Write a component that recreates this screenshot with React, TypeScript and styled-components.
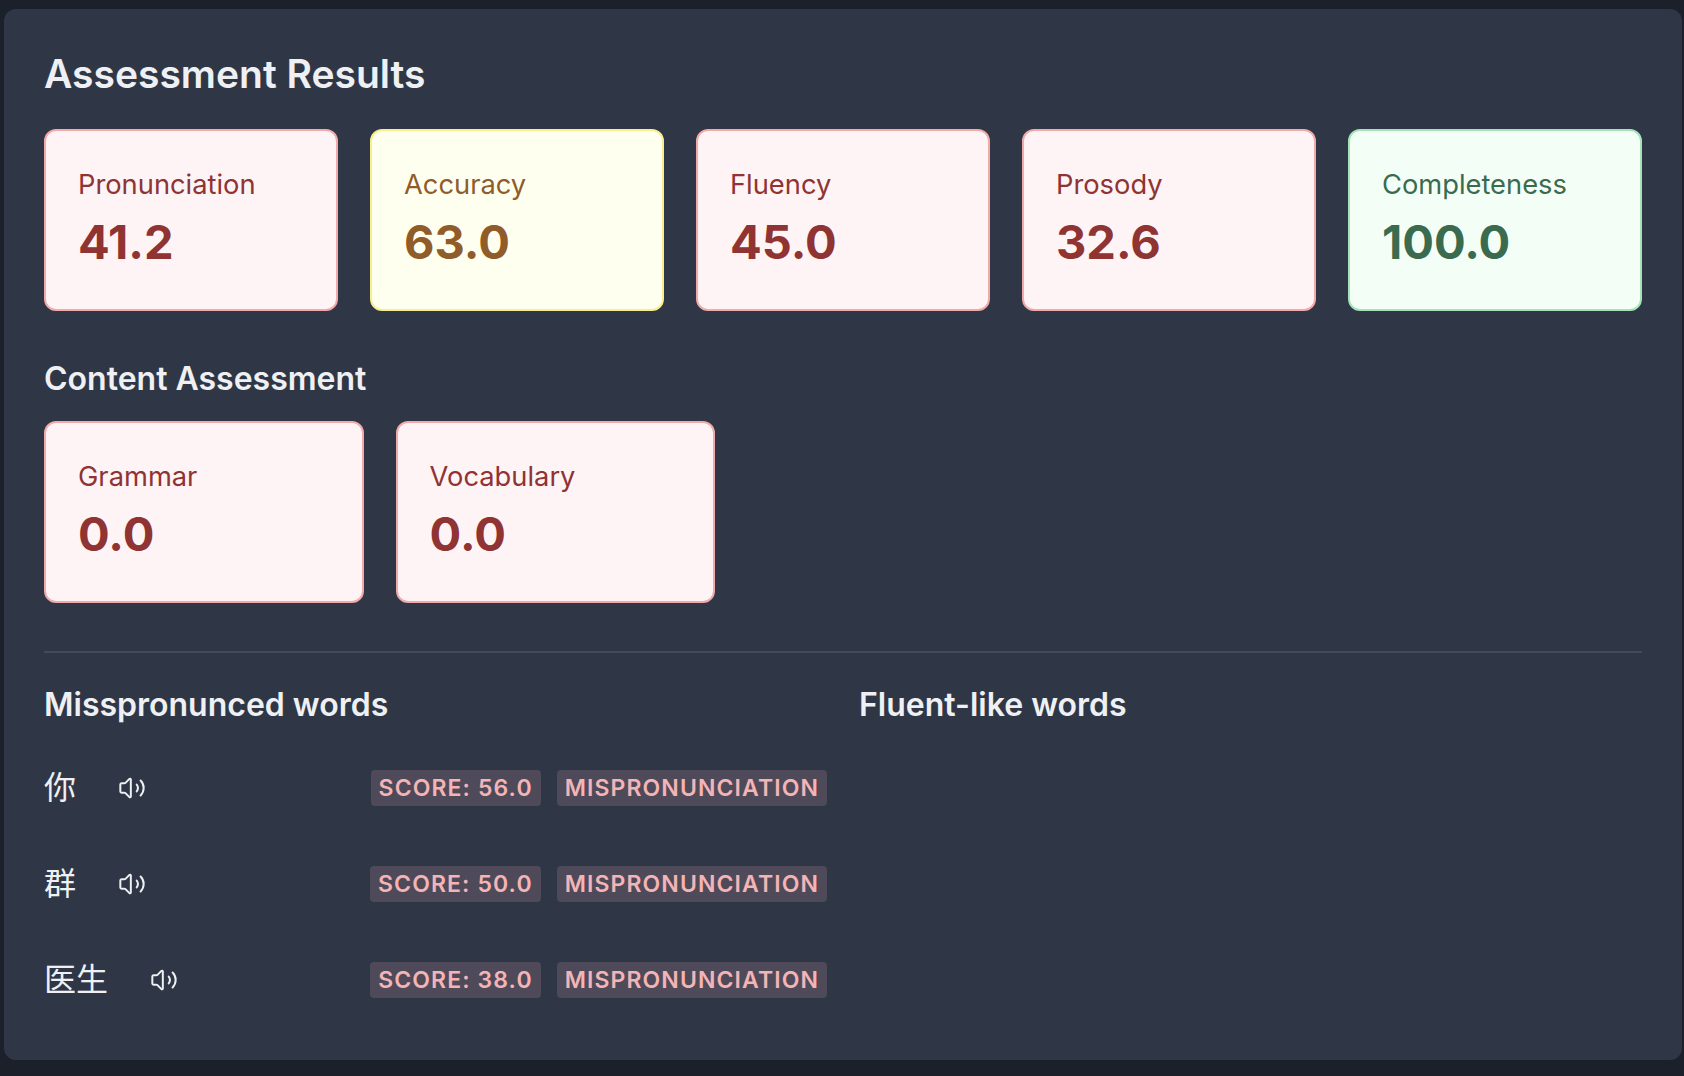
import styled, { createGlobalStyle } from 'styled-components';
import { Volume2 } from 'lucide-react';

const GlobalStyle = createGlobalStyle`
    html, body {
        margin: 0;
        padding: 0;
        background-color: #1b202b;
    }
    * {
        box-sizing: border-box;
    }
`;

type Tone = 'red' | 'yellow' | 'green';

const tones = {
    red: { bg: '#fef4f6', border: '#f2a9a9', text: '#8f3333' },
    yellow: { bg: '#fffff0', border: '#f7ef8f', text: '#8f5c2a' },
    green: { bg: '#f3fff6', border: '#a6e3b9', text: '#3b6b4e' },
};

const Page = styled.div`
    width: 1684px;
    height: 1076px;
    padding: 9px 2px 16px 4px;
    font-family: Inter, "Noto Sans CJK SC", sans-serif;
`;

const Panel = styled.div`
    height: 100%;
    padding: 40px;
    border-radius: 12px;
    background-color: #2f3747;
    color: #eff0f3;
`;

const Title = styled.h2`
    margin: 0 0 30px;
    font-size: 39px;
    line-height: 50px;
    font-weight: 600;
`;

const Subtitle = styled.h3`
    margin: 0 0 22px;
    font-size: 32px;
    line-height: 40px;
    font-weight: 600;
`;

const ColumnTitle = styled(Subtitle)`
    margin-bottom: 39px;
`;

const CardRow = styled.div`
    display: flex;
    gap: 32px;
    margin-bottom: 48px;
`;

const Card = styled.div<{ $tone: Tone }>`
    flex: 0 1 20%;
    height: 182px;
    padding: 32px;
    border: 2px solid ${(p) => tones[p.$tone].border};
    border-radius: 12px;
    background-color: ${(p) => tones[p.$tone].bg};
    color: ${(p) => tones[p.$tone].text};
`;

const CardLabel = styled.div`
    font-size: 27.3px;
    line-height: 44px;
`;

const CardValue = styled.div`
    margin-top: 5px;
    font-size: 47px;
    line-height: 60px;
    font-weight: 700;
`;

const Divider = styled.hr`
    margin: 48px 0 32px;
    border: none;
    border-top: 2px solid #444a59;
`;

const Columns = styled.div`
    display: grid;
    grid-template-columns: 1fr 1fr;
    gap: 32px;
`;

const WordList = styled.div`
    display: flex;
    flex-direction: column;
    gap: 48px;
`;

const WordRow = styled.div`
    display: flex;
    align-items: center;
    height: 48px;
`;

const Word = styled.span`
    font-size: 32px;
    line-height: 48px;
    font-weight: 400;
`;

const SoundButton = styled.button`
    display: flex;
    margin-left: 42px;
    padding: 0;
    border: none;
    background: none;
    color: #eff0f3;
`;

const Tags = styled.div`
    display: flex;
    gap: 16px;
    margin-left: auto;
`;

const Tag = styled.span`
    padding: 0 8px;
    border-radius: 4px;
    background-color: #4e4a59;
    color: #f4b4b6;
    font-size: 23px;
    line-height: 36px;
    font-weight: 600;
    letter-spacing: 0.048em;
    text-transform: uppercase;
`;

const scores: { label: string; value: string; tone: Tone }[] = [
    { label: 'Pronunciation', value: '41.2', tone: 'red' },
    { label: 'Accuracy', value: '63.0', tone: 'yellow' },
    { label: 'Fluency', value: '45.0', tone: 'red' },
    { label: 'Prosody', value: '32.6', tone: 'red' },
    { label: 'Completeness', value: '100.0', tone: 'green' },
];

const content: { label: string; value: string; tone: Tone }[] = [
    { label: 'Grammar', value: '0.0', tone: 'red' },
    { label: 'Vocabulary', value: '0.0', tone: 'red' },
];

const words = [
    { word: '你', score: '56.0' },
    { word: '群', score: '50.0' },
    { word: '医生', score: '38.0' },
];

export default function App() {
    return (
        <Page>
            <GlobalStyle />
            <Panel>
                <Title>Assessment Results</Title>
                <CardRow>
                    {scores.map((s) => (
                        <Card key={s.label} $tone={s.tone}>
                            <CardLabel>{s.label}</CardLabel>
                            <CardValue>{s.value}</CardValue>
                        </Card>
                    ))}
                </CardRow>
                <Subtitle>Content Assessment</Subtitle>
                <CardRow>
                    {content.map((s) => (
                        <Card key={s.label} $tone={s.tone}>
                            <CardLabel>{s.label}</CardLabel>
                            <CardValue>{s.value}</CardValue>
                        </Card>
                    ))}
                </CardRow>
                <Divider />
                <Columns>
                    <div>
                        <ColumnTitle>Misspronunced words</ColumnTitle>
                        <WordList>
                            {words.map((w) => (
                                <WordRow key={w.word}>
                                    <Word>{w.word}</Word>
                                    <SoundButton>
                                        <Volume2 size={28} strokeWidth={1.7} />
                                    </SoundButton>
                                    <Tags>
                                        <Tag>Score: {w.score}</Tag>
                                        <Tag>Mispronunciation</Tag>
                                    </Tags>
                                </WordRow>
                            ))}
                        </WordList>
                    </div>
                    <div>
                        <ColumnTitle>Fluent-like words</ColumnTitle>
                    </div>
                </Columns>
            </Panel>
        </Page>
    );
}
